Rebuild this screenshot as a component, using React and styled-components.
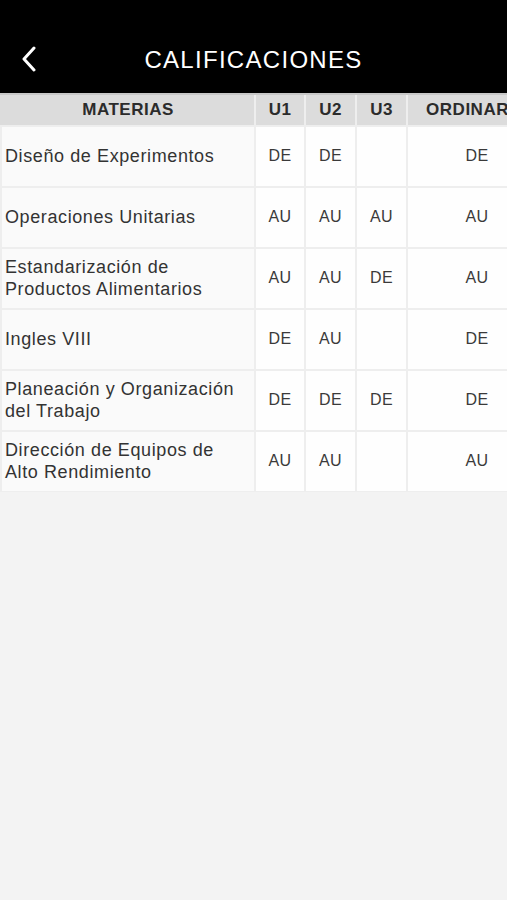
import React from 'react';
import styled, { createGlobalStyle } from 'styled-components';

const Global = createGlobalStyle`
  html, body {
    margin: 0;
    padding: 0;
    background: #f3f3f3;
    overflow: hidden;
  }
  body {
    font-family: "Liberation Sans", Arial, sans-serif;
  }
`;

const Page = styled.div`
  width: 507px;
  height: 900px;
  overflow: hidden;
  background: #f3f3f3;
`;

const TopBar = styled.header`
  height: 93px;
  background: #000;
  display: flex;
  align-items: flex-end;
  justify-content: center;
  position: relative;
  padding-bottom: 19px;
  box-sizing: border-box;
`;

const BackButton = styled.button`
  position: absolute;
  left: 18px;
  bottom: 20px;
  background: none;
  border: none;
  padding: 0;
  width: 22px;
  height: 28px;
  display: flex;
  align-items: center;
  justify-content: center;
`;

const Title = styled.h1`
  margin: 0;
  color: #fff;
  font-family: "Liberation Sans", Arial, sans-serif;
  font-weight: 400;
  font-size: 24px;
  letter-spacing: 1.3px;
`;

const Table = styled.div`
  display: grid;
  grid-template-columns: 252px 48px 49px 49px 138px;
  column-gap: 2px;
  row-gap: 2px;
  width: max-content;
  padding-left: 2px;
  padding-bottom: 1px;
  background: #eeeeee;
  border-top: 2px solid #c8c8c8;
`;

const HeadCell = styled.div`
  background: #dcdcdc;
  height: 30px;
  display: flex;
  align-items: center;
  justify-content: center;
  font-weight: 700;
  font-size: 17px;
  color: #2b2b2b;
  letter-spacing: 0.5px;
  margin-left: ${p => (p.$first ? '-2px' : '0')};
  padding-left: ${p => (p.$first ? '2px' : '0')};
`;

const HeadRow = styled.div`
  display: contents;
`;

const SubjectCell = styled.div`
  background: #fafafa;
  height: 59px;
  display: flex;
  align-items: center;
  padding-left: 3px;
  padding-bottom: 2px;
  box-sizing: border-box;
  font-size: 18px;
  line-height: 22px;
  letter-spacing: 0.6px;
  color: #333;
`;

const GradeCell = styled.div`
  background: #fefefe;
  height: 59px;
  display: flex;
  align-items: center;
  justify-content: center;
  padding-bottom: 2px;
  box-sizing: border-box;
  font-size: 16px;
  letter-spacing: 0.3px;
  color: #3a3a3a;
`;

const ChevronLeft = () => (
  <svg width="16" height="26" viewBox="0 0 16 26">
    <path d="M13 2 L3 13 L13 24" fill="none" stroke="#fff" strokeWidth="3" strokeLinecap="round" strokeLinejoin="round" />
  </svg>
);

const rows = [
  { name: 'Diseño de Experimentos', g: ['DE', 'DE', '', 'DE'] },
  { name: 'Operaciones Unitarias', g: ['AU', 'AU', 'AU', 'AU'] },
  { name: ['Estandarización de', 'Productos Alimentarios'], g: ['AU', 'AU', 'DE', 'AU'] },
  { name: 'Ingles VIII', g: ['DE', 'AU', '', 'DE'] },
  { name: ['Planeación y Organización', 'del Trabajo'], g: ['DE', 'DE', 'DE', 'DE'] },
  { name: ['Dirección de Equipos de', 'Alto Rendimiento'], g: ['AU', 'AU', '', 'AU'] },
];

const App = () => {
  return (
    <Page>
      <Global />
      <TopBar>
        <BackButton aria-label="Regresar">
          <ChevronLeft />
        </BackButton>
        <Title>CALIFICACIONES</Title>
      </TopBar>
      <Table>
        <HeadRow>
          <HeadCell $first>MATERIAS</HeadCell>
          <HeadCell>U1</HeadCell>
          <HeadCell>U2</HeadCell>
          <HeadCell>U3</HeadCell>
          <HeadCell>ORDINARIO</HeadCell>
        </HeadRow>
        {rows.map((r, i) => (
          <React.Fragment key={i}>
            <SubjectCell>
              {Array.isArray(r.name) ? (
                <span>{r.name[0]}<br />{r.name[1]}</span>
              ) : (
                r.name
              )}
            </SubjectCell>
            {r.g.map((v, j) => (
              <GradeCell key={j}>{v}</GradeCell>
            ))}
          </React.Fragment>
        ))}
      </Table>
    </Page>
  );
};

export default App;
